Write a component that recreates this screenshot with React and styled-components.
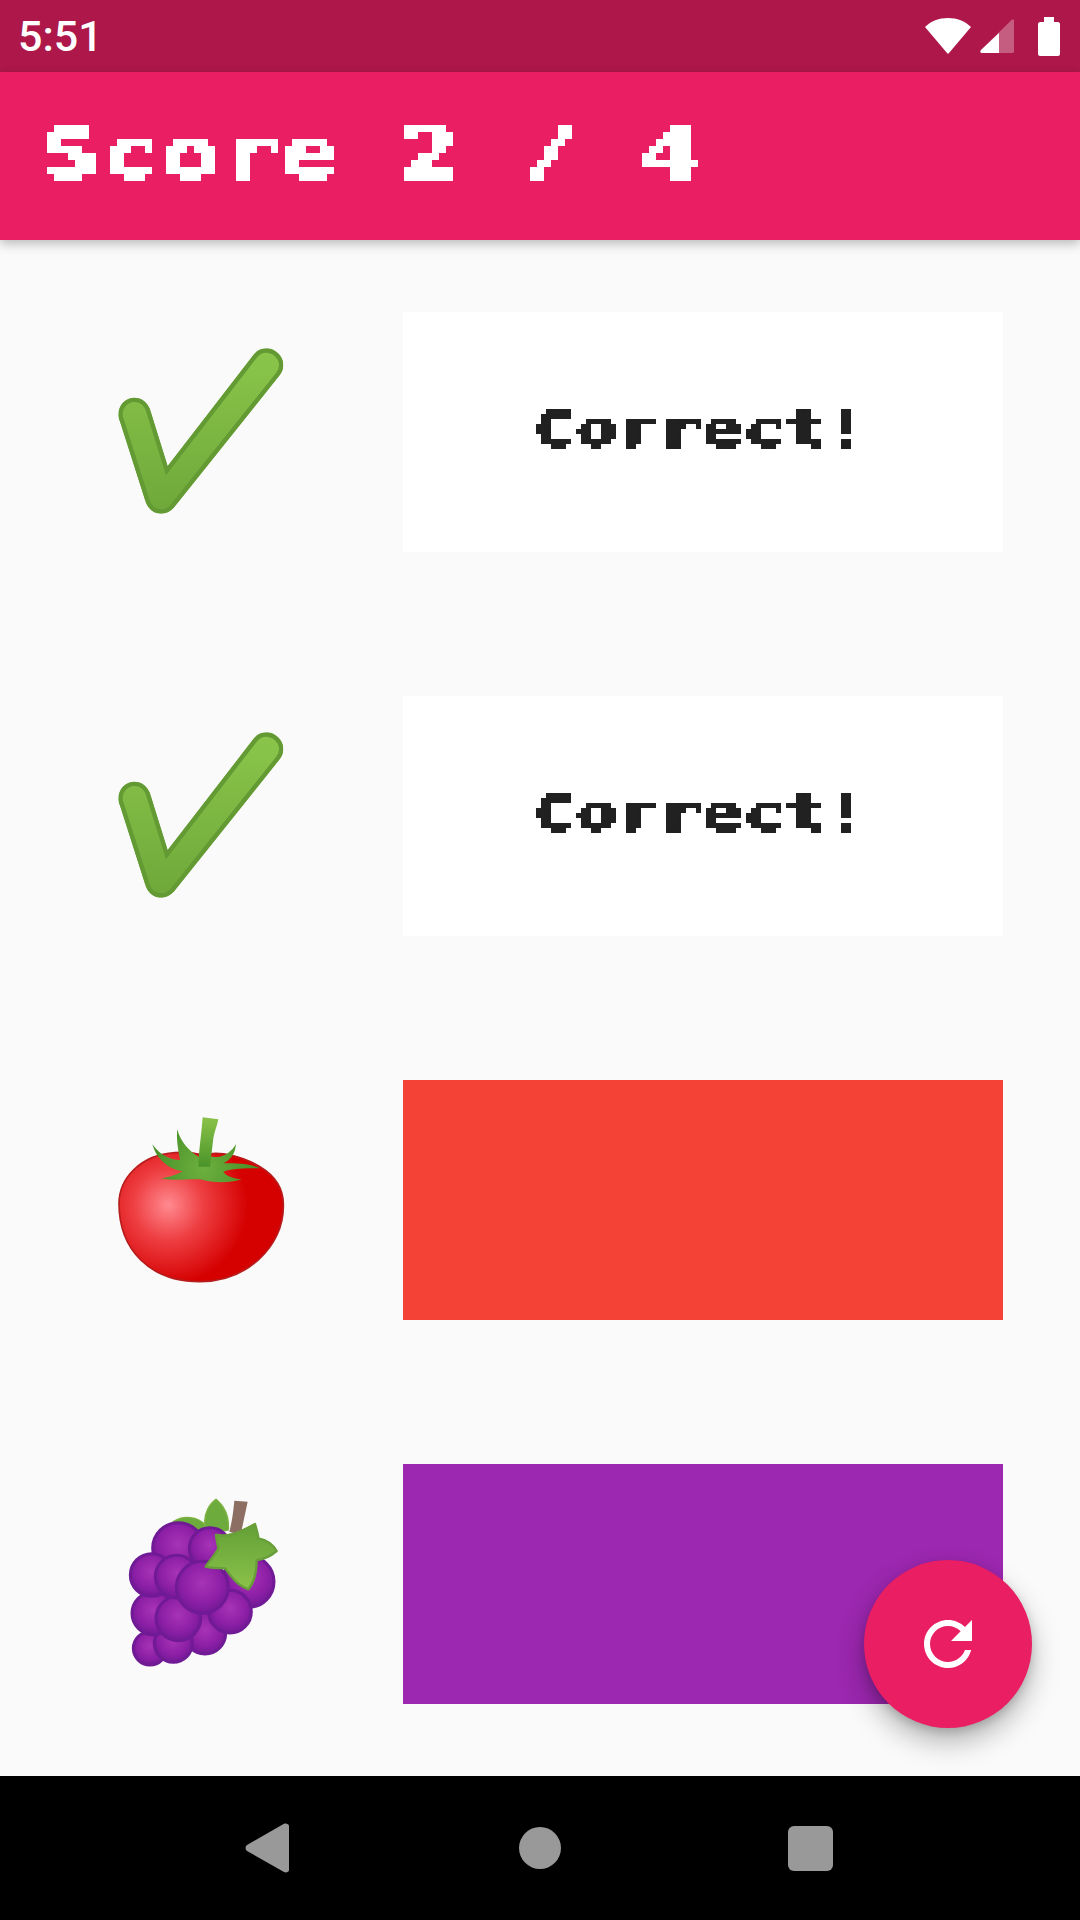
import React from 'react'
import styled, { createGlobalStyle } from 'styled-components'

const GlobalStyle = createGlobalStyle`
  html, body { margin: 0; padding: 0; background: #fafafa; }
  body { width: 1080px; height: 1920px; overflow: hidden; font-family: "Roboto", "Liberation Sans", sans-serif; }
`

const rows = [
  { kind: 'check', text: 'Correct!' },
  { kind: 'check', text: 'Correct!' },
  { kind: 'tomato', color: '#f44336' },
  { kind: 'grapes', color: '#9c27b0' },
]

const berries = [
  [120, 505, 50], [285, 460, 62], [190, 490, 57],
  [130, 400, 64], [415, 305, 77], [205, 205, 77], [300, 205, 62], [125, 285, 64],
  [205, 415, 67], [200, 290, 64], [360, 395, 64], [277, 322, 78],
]

const CHECK = 'M85 283C85 255 107 233 133 233C155 233 173 247 180 268L233 438L490 105C500 92 513 85 528 85C556 85 580 108 580 135C580 147 576 157 569 166L258 555C246 571 232 581 213 581C190 581 172 565 165 540L90 305C86 296 85 290 85 283Z'

const CheckIcon = ({ id }) => (
  <EmojiSvg viewBox="0 6 660 660">
    <defs>
      <linearGradient id={id} x1="0" y1="85" x2="0" y2="580" gradientUnits="userSpaceOnUse">
        <stop offset="0" stopColor="#8bc64b" />
        <stop offset="1" stopColor="#6ea83a" />
      </linearGradient>
      <clipPath id={id + 'c'}><path d={CHECK} /></clipPath>
    </defs>
    <path d={CHECK} fill={`url(#${id})`} stroke="#639a33" strokeWidth="26" clipPath={`url(#${id}c)`} />
  </EmojiSvg>
)

const TomatoIcon = () => (
  <EmojiSvg viewBox="-30 -30 660 660">
    <defs>
      <radialGradient id="tom" cx="205" cy="315" r="300" gradientUnits="userSpaceOnUse">
        <stop offset="0" stopColor="#ff8a8f" />
        <stop offset="0.35" stopColor="#ee3f43" />
        <stop offset="0.8" stopColor="#d50000" />
        <stop offset="1" stopColor="#d50000" />
      </radialGradient>
      <linearGradient id="stem" x1="0" y1="50" x2="0" y2="200" gradientUnits="userSpaceOnUse">
        <stop offset="0" stopColor="#8bc34a" />
        <stop offset="1" stopColor="#4a9429" />
      </linearGradient>
      <radialGradient id="calyx" cx="310" cy="205" r="160" gradientUnits="userSpaceOnUse">
        <stop offset="0" stopColor="#6cb03f" />
        <stop offset="1" stopColor="#478f26" />
      </radialGradient>
    </defs>
    <path d="M57 310C58 235 120 165 225 158C270 155 290 160 310 165C360 150 430 170 480 200C530 230 552 270 550 320C550 440 440 545 300 545C150 545 57 450 57 310Z" fill="url(#tom)" stroke="#b71c1c" strokeWidth="5" />
    <path d="M232 88C240 125 270 155 295 170L340 170C370 175 395 155 408 132C405 165 390 180 370 190C410 190 450 190 480 205C440 205 400 205 370 215C380 230 400 235 425 238C390 250 340 250 300 238C270 235 230 245 182 235C205 232 230 225 248 213C210 210 170 180 157 133C180 165 210 180 240 180C235 150 228 120 232 88Z" fill="url(#calyx)" />
    <path d="M308 52L355 58C352 75 345 90 340 115L330 200L295 200C296 150 305 100 308 52Z" fill="url(#stem)" />
  </EmojiSvg>
)

const GrapesIcon = () => (
  <EmojiSvg viewBox="-60 -18 660 660">
    <defs>
      <radialGradient id="berry" cx="0.5" cy="0.42" r="0.55">
        <stop offset="0" stopColor="#a833b6" />
        <stop offset="0.7" stopColor="#8c1fa6" />
        <stop offset="1" stopColor="#761a98" />
      </radialGradient>
      <linearGradient id="leaf" x1="0" y1="130" x2="0" y2="330" gradientUnits="userSpaceOnUse">
        <stop offset="0" stopColor="#639f36" />
        <stop offset="1" stopColor="#8bc34a" />
      </linearGradient>
    </defs>
    <path d="M190 125C220 105 265 110 285 135C280 100 300 70 318 58C345 80 358 110 355 150L270 170Z" fill="#6dab3c" stroke="#7cb342" strokeWidth="4" />
    <path d="M373 62L413 65C407 95 400 125 392 165L358 155C366 125 370 95 373 62Z" fill="#8d6e63" />
    {berries.map(([cx, cy, r], i) => (
      <circle key={i} cx={cx} cy={cy} r={r} fill="url(#berry)" stroke="#701a96" strokeWidth="9" />
    ))}
    <path d="M318 165C350 170 375 165 435 132C440 150 445 165 445 175C470 180 490 195 500 213C480 230 460 238 440 240C440 280 430 310 415 328C395 320 375 305 365 290C355 280 350 270 345 265C325 265 305 265 287 260C300 240 315 225 325 205C322 190 320 180 318 165Z" fill="url(#leaf)" stroke="#689f38" strokeWidth="7" strokeLinejoin="round" />
  </EmojiSvg>
)

const App = () => {
  return (
    <Screen>
      <GlobalStyle />
      <FilterDefs aria-hidden="true">
        <defs>
          <filter id="pixel7" x="0" y="0" width="100%" height="100%" colorInterpolationFilters="sRGB">
            <feFlood x="3" y="3" width="1" height="1" />
            <feComposite width="7" height="7" />
            <feTile result="grid" />
            <feComposite in="SourceGraphic" in2="grid" operator="in" />
            <feComponentTransfer>
              <feFuncA type="discrete" tableValues="0 1" />
            </feComponentTransfer>
            <feMorphology operator="dilate" radius="3" />
          </filter>
          <filter id="pixel5" x="0" y="0" width="100%" height="100%" colorInterpolationFilters="sRGB">
            <feFlood x="2" y="2" width="1" height="1" />
            <feComposite width="5" height="5" />
            <feTile result="grid" />
            <feComposite in="SourceGraphic" in2="grid" operator="in" />
            <feComponentTransfer>
              <feFuncA type="discrete" tableValues="0 1" />
            </feComponentTransfer>
            <feMorphology operator="dilate" radius="2" />
          </filter>
        </defs>
      </FilterDefs>

      <StatusBar>
        <Clock>5:51</Clock>
        <StatusIcons>
          <svg width="46" height="36" viewBox="0 0 46 36">
            <path d="M0 9C6 3 14 0 23 0C32 0 40 3 46 9L24 35C23.500 36 22.500 36 22 35Z" fill="#fff" />
          </svg>
          <svg width="34" height="34" viewBox="0 0 34 34">
            <path d="M34 2C34 0 32.500 0 31.500 1L1 31C0 32 0 34 2 34H32C33.500 34 34 33.500 34 32Z" fill="#fff" fillOpacity="0.3" />
            <path d="M19 14L1 31C0 32 0 34 2 34H19Z" fill="#fff" />
          </svg>
          <svg width="22" height="39" viewBox="0 0 22 39">
            <path d="M6 5V0H16V5H20C21 5 22 6 22 7V37C22 38 21 39 20 39H2C1 39 0 38 0 37V7C0 6 1 5 2 5Z" fill="#fff" />
          </svg>
        </StatusIcons>
      </StatusBar>

      <AppBar>
        <ScoreTitle><ScoreText>Score 2 / 4</ScoreText></ScoreTitle>
      </AppBar>

      <Content>
        {rows.map((row, i) => (
          <Row key={i}>
            <EmojiCell>
              {row.kind === 'check' && <CheckIcon id={'chk' + i} />}
              {row.kind === 'tomato' && <TomatoIcon />}
              {row.kind === 'grapes' && <GrapesIcon />}
            </EmojiCell>
            <Card $color={row.color}>
              {row.text && <CardLabel><CardText>{row.text}</CardText></CardLabel>}
            </Card>
          </Row>
        ))}
        <Fab aria-label="Restart">
          <svg width="72" height="72" viewBox="0 0 24 24">
            <path fill="#fff" d="M17.65 6.35C16.2 4.9 14.21 4 12 4c-4.42 0-7.99 3.58-7.99 8s3.57 8 7.99 8c3.73 0 6.84-2.55 7.73-6h-2.08c-.82 2.33-3.04 4-5.65 4-3.31 0-6-2.69-6-6s2.69-6 6-6c1.66 0 3.14.69 4.22 1.78L13 11h7V4l-2.35 2.35z" />
          </svg>
        </Fab>
      </Content>

      <NavBar>
        <svg width="44" height="50" viewBox="0 0 44 50">
          <path d="M2 22L39 0.800C41 0 44 1 44 3V47C44 49 41 50 39 49L2 28C0 26.500 0 23.500 2 22Z" fill="#999" />
        </svg>
        <HomeDot />
        <RecentSquare />
      </NavBar>
    </Screen>
  )
}

const Screen = styled.div`
  width: 1080px;
  height: 1920px;
  display: flex;
  flex-direction: column;
  overflow: hidden;
  background: #fafafa;
`

const FilterDefs = styled.svg`
  width: 0;
  height: 0;
  position: absolute;
`

const StatusBar = styled.div`
  height: 72px;
  flex: none;
  background: #ad1749;
  display: flex;
  align-items: center;
  justify-content: space-between;
  padding: 0 20px 0 18px;
  color: #fff;
`

const Clock = styled.span`
  font-size: 43px;
  font-weight: 500;
  line-height: 76px;
`

const StatusIcons = styled.div`
  display: flex;
  align-items: center;
  gap: 9px;
  svg:nth-child(3) { margin-left: 15px; }
`

const AppBar = styled.header`
  height: 168px;
  flex: none;
  background: #e91e63;
  padding-left: 40px;
  display: flex;
  align-items: center;
  box-shadow: 0 4px 10px rgba(0, 0, 0, 0.25);
  position: relative;
  z-index: 1;
`

const ScoreTitle = styled.h1`
  margin: 0 0 4px;
  width: 700px;
  height: 100px;
  filter: url(#pixel7);
  color: #fff;
  font: 700 68px/100px "DejaVu Sans Mono", "Liberation Mono", monospace;
  -webkit-text-stroke: 2px #fff;
`

const ScoreText = styled.span`
  display: inline-block;
  white-space: pre;
  transform: scaleX(1.465);
  transform-origin: left center;
`

const Content = styled.main`
  flex: 1;
  position: relative;
  padding-top: 72px;
  display: flex;
  flex-direction: column;
  gap: 144px;
  overflow: hidden;
`

const Row = styled.div`
  display: flex;
  align-items: center;
  height: 240px;
  padding-left: 90px;
  gap: 93px;
`

const EmojiCell = styled.div`
  width: 220px;
  height: 220px;
  flex: none;
`

const EmojiSvg = styled.svg`
  display: block;
  width: 220px;
  height: 220px;
`

const Card = styled.div`
  width: 600px;
  height: 240px;
  background: ${p => p.$color || '#fff'};
  display: flex;
  align-items: center;
  justify-content: center;
`

const CardLabel = styled.div`
  width: 400px;
  height: 80px;
  display: flex;
  align-items: center;
  justify-content: center;
  margin: -6px 4px 0 0;
  filter: url(#pixel5);
  color: #212121;
  font: 700 50px/80px "DejaVu Sans Mono", "Liberation Mono", monospace;
  -webkit-text-stroke: 1.5px #212121;
`

const CardText = styled.span`
  display: inline-block;
  transform: scaleX(1.39);
`

const Fab = styled.button`
  position: absolute;
  left: 864px;
  top: 1320px;
  width: 168px;
  height: 168px;
  border: none;
  padding: 0;
  border-radius: 50%;
  background: #e91e63;
  box-shadow: 0 14px 28px rgba(0, 0, 0, 0.28), 0 4px 10px rgba(0, 0, 0, 0.15);
  display: flex;
  align-items: center;
  justify-content: center;
`

const NavBar = styled.nav`
  height: 144px;
  flex: none;
  background: #000;
  display: flex;
  align-items: center;
  padding-left: 245px;
`

const HomeDot = styled.div`
  width: 42px;
  height: 42px;
  margin-left: 230px;
  border-radius: 50%;
  background: #999;
`

const RecentSquare = styled.div`
  width: 45px;
  height: 45px;
  margin-left: 227px;
  border-radius: 6px;
  background: #999;
`

export default App
